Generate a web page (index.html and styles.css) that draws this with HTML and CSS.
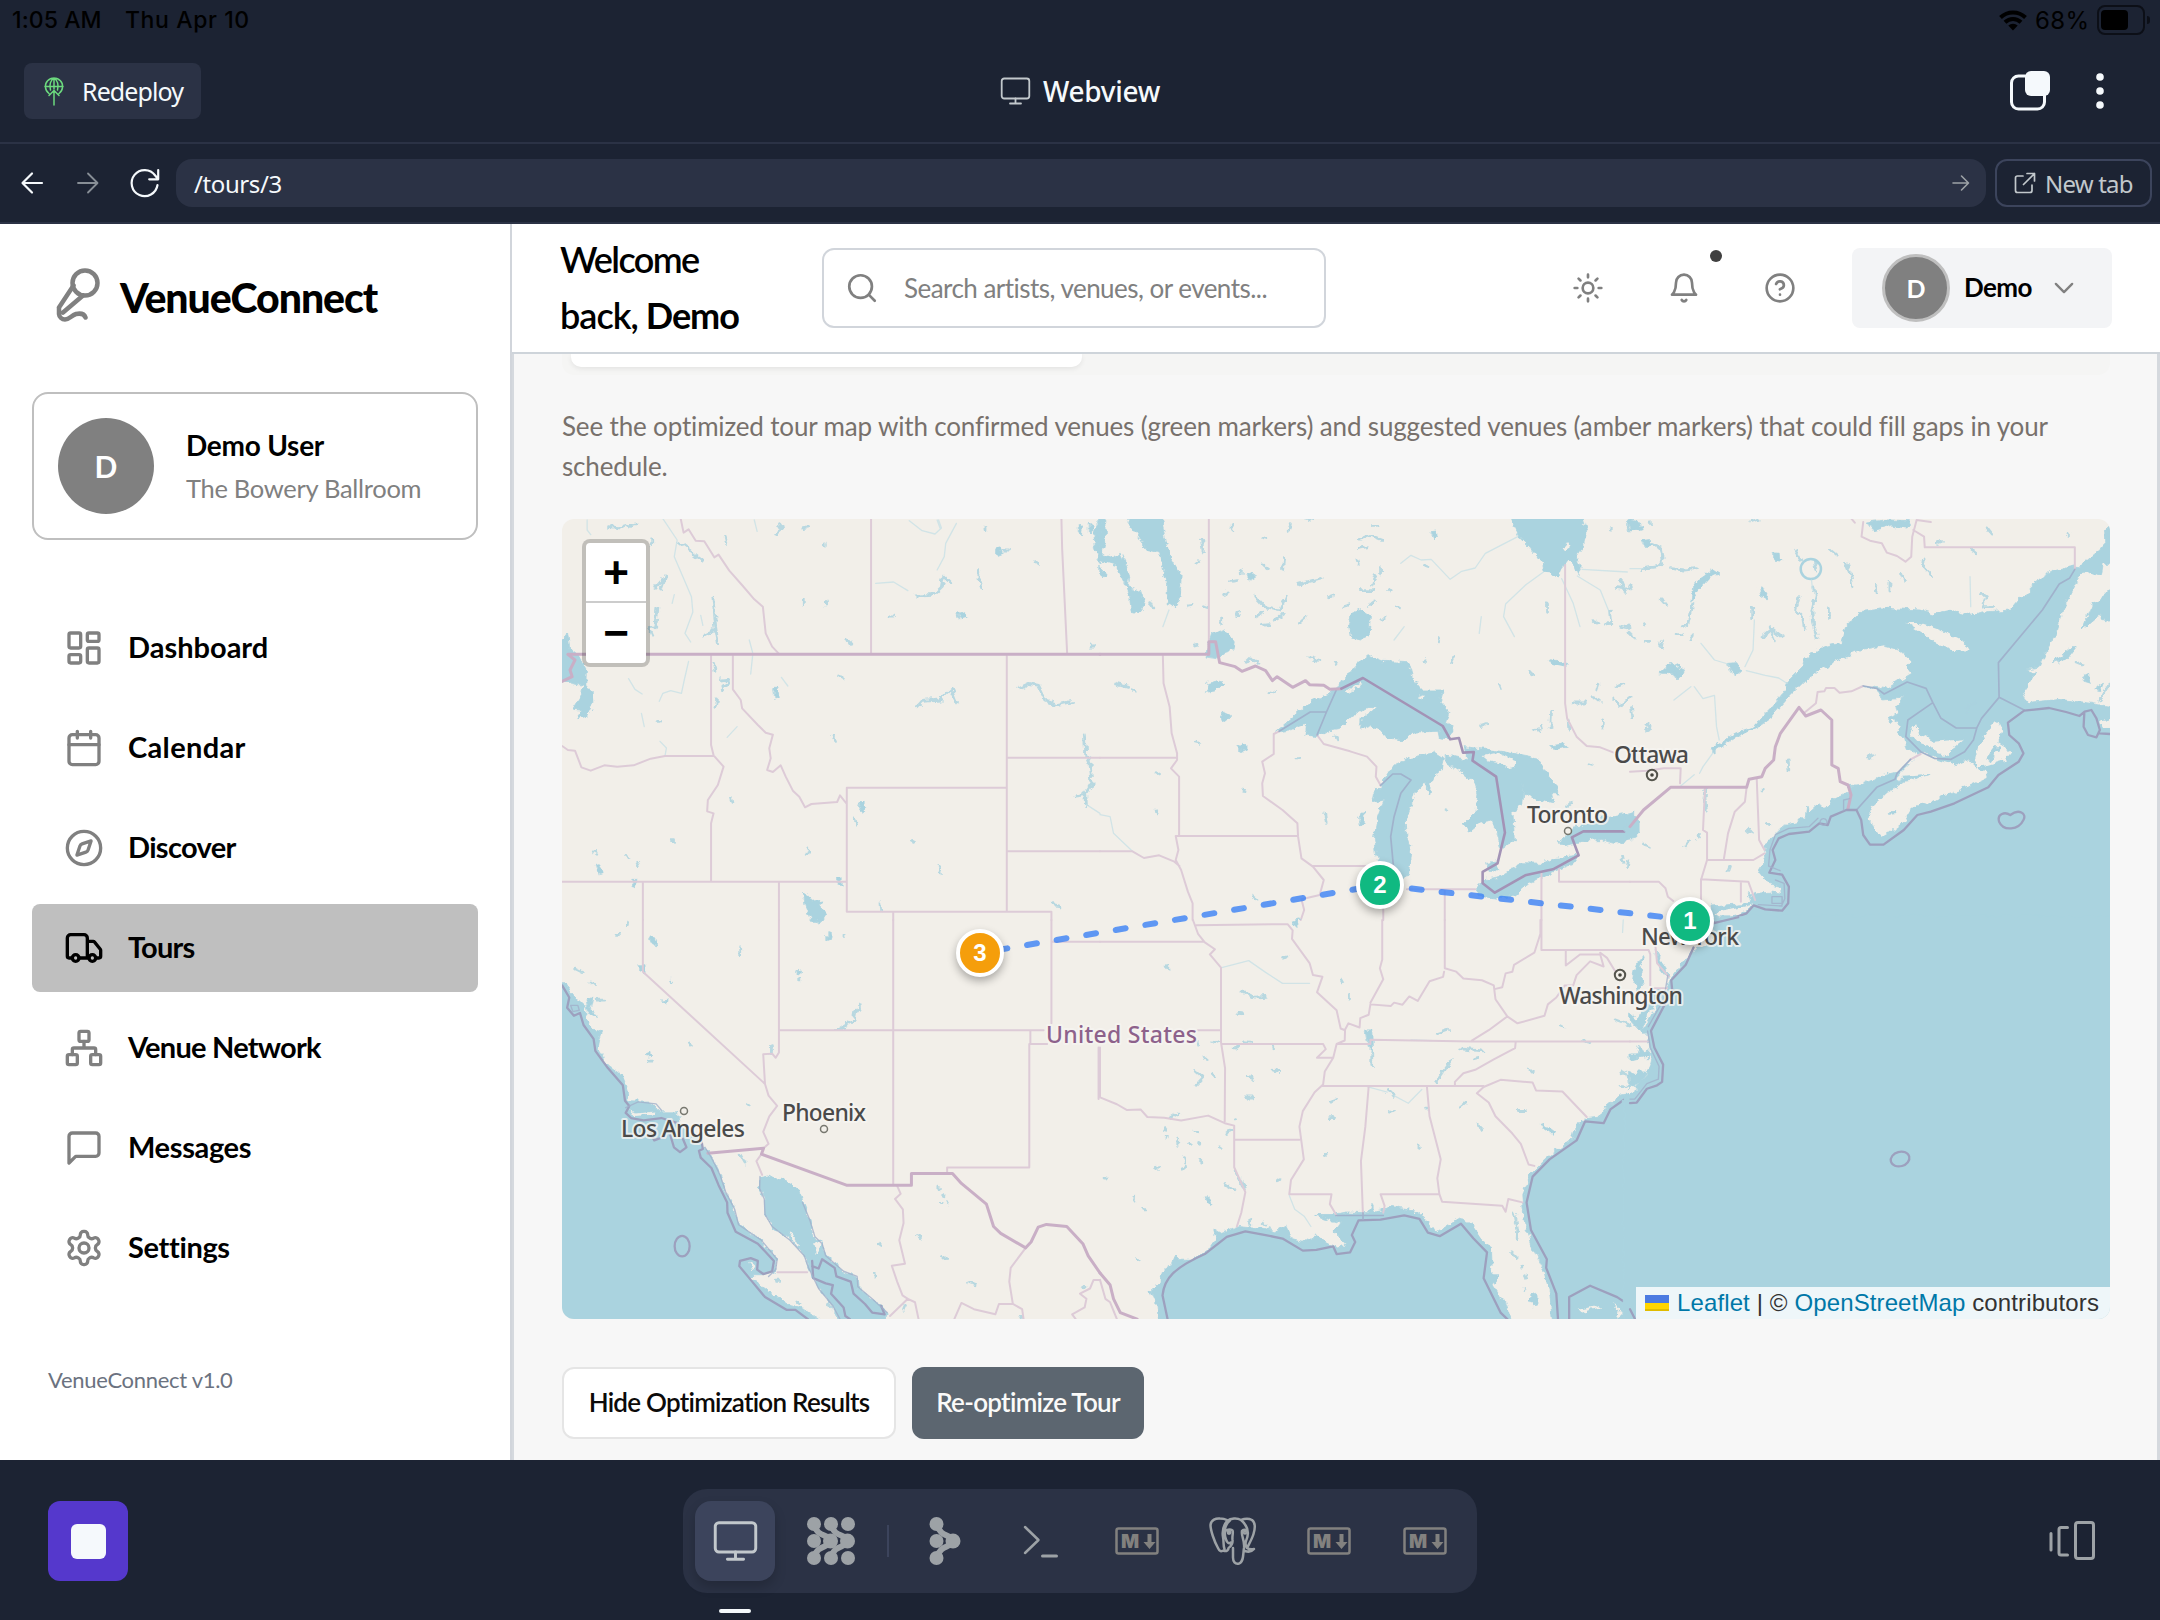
FILE: index.html
```html
<!DOCTYPE html>
<html lang="en">
<head>
<meta charset="utf-8">
<title>Webview</title>
<link rel="stylesheet" href="styles.css">
</head>
<body>
<svg class="defs" width="0" height="0">
  <symbol id="monitor" viewBox="0 0 30 30"><rect x="1.2" y="2.5" width="27.6" height="20" rx="2.5"/><path d="M15 22.500v5M9.500 27.500h11"/></symbol>
  <filter id="rough" x="-5%" y="-5%" width="110%" height="110%"><feTurbulence type="fractalNoise" baseFrequency=".045" numOctaves="3" seed="4"/><feDisplacementMap in="SourceGraphic" scale="22" xChannelSelector="R" yChannelSelector="G"/></filter>
</svg>

<div class="status">
  <span class="status-time">1:05 AM</span><span class="status-date">Thu Apr 10</span>
  <svg class="wifi" viewBox="0 0 28 22"><path d="M1.500 8a18 18 0 0 1 25 0M6 12.800a11.500 11.500 0 0 1 16 0"/><path class="solid" d="M9.300 16a7 7 0 0 1 9.400 0L14 21z"/></svg>
  <span class="status-pct">68%</span>
  <span class="battery"><i></i></span>
</div>

<header class="topbar">
  <button class="redeploy"><svg viewBox="0 0 24 30"><path d="M7 17.500A8.600 8.600 0 1 1 17 17.500M3 10.500h18M12 2v11M8.500 14C7 9 8.500 4 12 2c3.500 2 5 7 3.500 12M12 29V14.500M7 19.500l5-5 5 5"/></svg><span>Redeploy</span></button>
  <div class="title"><svg class="ic-mon"><use href="#monitor"/></svg><span>Webview</span></div>
  <div class="top-actions">
    <svg class="ic-tabs" viewBox="0 0 42 42"><path d="M16 6H9.500A7 7 0 0 0 2.500 13v19a7 7 0 0 0 7 7h19a7 7 0 0 0 7-7V25"/><rect x="16" y="1" width="25" height="25" rx="6"/></svg>
    <svg class="ic-dots" viewBox="0 0 8 36"><circle cx="4" cy="4" r="3.800"/><circle cx="4" cy="18" r="3.800"/><circle cx="4" cy="32" r="3.800"/></svg>
  </div>
</header>

<nav class="urlbar">
  <svg class="nav-ic" viewBox="0 0 24 24"><path d="M22 12H3M12 2.500 2.500 12l9.500 9.500"/></svg>
  <svg class="nav-ic dim" viewBox="0 0 24 24"><path d="M2 12h19M12 2.500 21.500 12 12 21.500"/></svg>
  <svg class="nav-ic reload" viewBox="0 0 32 32"><path d="M28.500 18a13 13 0 1 1-2.300-9.500L29 12M29.200 3v9.300h-9"/></svg>
  <div class="url"><span>/tours/3</span><svg viewBox="0 0 18 18"><path d="M1 9h15M9.500 2 16.500 9l-7 7"/></svg></div>
  <button class="newtab"><svg viewBox="0 0 22 22"><path d="M9 4H3.500A2 2 0 0 0 1.500 6v12.500a2 2 0 0 0 2 2H16a2 2 0 0 0 2-2V13M13 1.500h7.500V9M20.500 1.500 9.500 12.500"/></svg><span>New tab</span></button>
</nav>

<div class="app">
  <aside class="sidebar">
    <div class="brand">
      <svg viewBox="0 0 44 54"><circle cx="29" cy="15" r="12.500"/><path d="M17.500 17.500 3 39.500M27 27.500 7 44.500M3 39.500v6.500a6 6 0 0 0 6 5.500c4.500 0 6-4 11-5.500 5-1 8.500.5 9.500 3.500"/></svg>
      <span>VenueConnect</span>
    </div>
    <div class="profile">
      <div class="avatar">D</div>
      <div><div class="p-name">Demo User</div><div class="p-venue">The Bowery Ballroom</div></div>
    </div>
    <div class="menu">
      <a><svg viewBox="0 0 24 24"><rect width="7" height="9" x="3" y="3" rx="1"/><rect width="7" height="5" x="14" y="3" rx="1"/><rect width="7" height="9" x="14" y="12" rx="1"/><rect width="7" height="5" x="3" y="16" rx="1"/></svg><span class="m-dashboard">Dashboard</span></a>
      <a><svg viewBox="0 0 24 24"><path d="M8 2v4M16 2v4M3 10h18"/><rect width="18" height="18" x="3" y="4" rx="2"/></svg><span class="m-calendar">Calendar</span></a>
      <a><svg viewBox="0 0 24 24"><circle cx="12" cy="12" r="10"/><path d="m16.240 7.760-1.804 5.411a2 2 0 0 1-1.265 1.265L7.760 16.240l1.804-5.411a2 2 0 0 1 1.265-1.265z"/></svg><span class="m-discover">Discover</span></a>
      <a class="active"><svg viewBox="0 0 24 24"><path d="M14 18V6a2 2 0 0 0-2-2H4a2 2 0 0 0-2 2v11a1 1 0 0 0 1 1h2M15 18H9M19 18h2a1 1 0 0 0 1-1v-3.650a1 1 0 0 0-.220-.624l-3.480-4.350A1 1 0 0 0 17.520 8H14"/><circle cx="17" cy="18" r="2"/><circle cx="7" cy="18" r="2"/></svg><span class="m-tours">Tours</span></a>
      <a><svg viewBox="0 0 24 24"><rect x="16" y="16" width="6" height="6" rx="1"/><rect x="2" y="16" width="6" height="6" rx="1"/><rect x="9" y="2" width="6" height="6" rx="1"/><path d="M5 16v-3a1 1 0 0 1 1-1h12a1 1 0 0 1 1 1v3M12 12V8"/></svg><span class="m-network">Venue Network</span></a>
      <a><svg viewBox="0 0 24 24"><path d="M21 15a2 2 0 0 1-2 2H7l-4 4V5a2 2 0 0 1 2-2h14a2 2 0 0 1 2 2z"/></svg><span class="m-messages">Messages</span></a>
      <a><svg viewBox="0 0 24 24"><path d="M12.220 2h-.440a2 2 0 0 0-2 2v.180a2 2 0 0 1-1 1.730l-.430.250a2 2 0 0 1-2 0l-.150-.080a2 2 0 0 0-2.730.730l-.220.380a2 2 0 0 0 .730 2.730l.150.100a2 2 0 0 1 1 1.720v.510a2 2 0 0 1-1 1.740l-.150.090a2 2 0 0 0-.730 2.730l.220.380a2 2 0 0 0 2.730.730l.150-.080a2 2 0 0 1 2 0l.430.250a2 2 0 0 1 1 1.730V20a2 2 0 0 0 2 2h.440a2 2 0 0 0 2-2v-.180a2 2 0 0 1 1-1.730l.430-.250a2 2 0 0 1 2 0l.150.080a2 2 0 0 0 2.730-.730l.220-.390a2 2 0 0 0-.730-2.730l-.150-.080a2 2 0 0 1-1-1.740v-.500a2 2 0 0 1 1-1.740l.150-.090a2 2 0 0 0 .730-2.730l-.220-.380a2 2 0 0 0-2.730-.730l-.150.080a2 2 0 0 1-2 0l-.430-.250a2 2 0 0 1-1-1.730V4a2 2 0 0 0-2-2z"/><circle cx="12" cy="12" r="3"/></svg><span class="m-settings">Settings</span></a>
    </div>
    <div class="version">VenueConnect v1.0</div>
  </aside>

  <section class="main">
    <header class="head">
      <h1><span class="h-welcome">Welcome</span><br><span>back, <b>Demo</b></span></h1>
      <div class="search"><svg viewBox="0 0 24 24"><circle cx="11" cy="11" r="8"/><path d="m21 21-4.300-4.300"/></svg><span>Search artists, venues, or events...</span></div>
      <div class="tools">
        <svg viewBox="0 0 24 24"><circle cx="12" cy="12" r="4"/><path d="M12 2v2M12 20v2M4.930 4.930l1.410 1.410M17.660 17.660l1.410 1.410M2 12h2M20 12h2M6.340 17.660l-1.410 1.410M19.070 4.930l-1.410 1.410"/></svg>
        <div class="bell"><svg viewBox="0 0 24 24"><path d="M6 8a6 6 0 0 1 12 0c0 7 3 9 3 9H3s3-2 3-9M10.300 21a1.940 1.940 0 0 0 3.400 0"/></svg><i></i></div>
        <svg viewBox="0 0 24 24"><circle cx="12" cy="12" r="10"/><path d="M9.090 9a3 3 0 0 1 5.830 1c0 2-3 3-3 3M12 17h.010"/></svg>
      </div>
      <button class="user"><span class="u-av">D</span><span class="u-name">Demo</span><svg viewBox="0 0 24 24"><path d="m5 8.500 7 7 7-7"/></svg></button>
    </header>

    <div class="content">
      <div class="strip"><div class="tab"></div></div>
      <p class="desc"><span>See the optimized tour map with confirmed venues (green markers) and suggested venues (amber markers) that could fill gaps in your</span><br><em>schedule.</em></p>
      <div class="map">
        <svg class="map-svg" viewBox="562 519 1548 800">
          <!-- north-west -->
          <g transform="translate(540 500) scale(.35714 .33333)">
            <path class="water" d="M50 430 70 408 80 396 86 450 110 470 130 510 128 560 146 570 148 610 130 650 100 656 120 630 94 628 116 590 120 556 90 550 50 540ZM738 1178 756 1190 764 1204 790 1200 778 1216 804 1240 790 1264H760L742 1215ZM1508 72 1522 84 1518 104 1508 96ZM1536 70 1546 76 1544 96 1536 92ZM1550 90 1572 50V190L1556 150ZM652 570 662 556 670 590 656 594ZM890 914 902 904 912 928 904 936ZM1168 344 1184 338 1196 352 1182 356ZM1278 146 1290 142 1294 160 1280 166ZM158 1096 166 1094 174 1118 164 1120ZM258 1138H268V1160L256 1156ZM836 1134H846V1156H836Z"/>
            <path class="lake" d="M508 540 522 538 526 550 512 558 514 570M1058 620 1072 604 1120 600 1152 568 1166 606M1052 288 1100 286 1124 262 1130 228 1150 250M1338 566 1370 550 1396 556 1416 600 1450 614 1492 604M1228 212 1230 244 1238 264M484 292 492 380 500 434M458 410 490 392M330 326 324 380 306 384 316 408M338 270 352 228 324 262M820 704 830 728M736 86 748 84M668 74 676 88 660 102M796 132V138M1246 76V92M740 298V316M802 306V316M862 420 870 436M980 348H990M1298 150H1312M750 1050 745 1066M536 894 540 910M880 960 884 976M326 664H338M362 1022H374M240 1066 246 1076M1040 1016 1046 1030M1120 1096 1124 1116M952 1206 954 1236M1524 704 1528 760 1540 790 1546 850 1528 880 1530 914M1498 888 1528 884M386 124 448 174 452 188M516 112 520 130M192 80 228 84 266 72M1540 438H1550M310 116V132M1388 184 1396 194M1436 1214 1456 1218M486 490 490 514M494 600 490 622M836 528 852 532M154 1054 156 1060M274 1084 278 1094"/>
            <path class="river" d="M344 56 384 120 376 170 404 240 424 290 428 336 406 400 422 426M416 484 404 540 396 580 366 572 344 580 334 604M586 420 596 460 590 522M248 536 266 568 286 582M676 532 694 558M524 712 552 680M336 724 354 744 350 768M1034 62 1070 92 1106 102 1124 84 1116 60M1166 70 1136 130 1132 170 1112 210M940 250 990 246 1030 272M370 310 376 284M450 346 456 376M284 640 292 680M1530 914 1568 940M1112 60 1120 84M132 60V90L142 104M600 60 608 94"/>
            <path class="state" d="M394 56 402 98 416 88 436 122 460 124 488 172 500 164 530 212 568 258 600 298 624 320 632 400 650 440 668 460M927 56V460M1460 56 1462 145 1476 460M1307 468V1235M1307 773H1568M1307 1054H1568M859 863H1307M859 863V1235H1432V1260M989 1235V1260M479 468V735L486 766 514 800 498 855 470 900 468 934 486 940 479 970V1145M540 468V568L562 600 566 625 610 675 632 698 652 704 642 745 646 775 636 810 652 816 674 796 688 830 708 872 726 890 742 922 760 912 832 906 840 886 859 912M62 1145H859M288 1145V1260M669 1145V1260M62 738 78 750 98 752 116 802 142 812 180 796 216 800 262 796 310 776 350 768H486"/>
            <path class="nation" d="M62 544 90 530 84 510 98 480 78 463H1568"/>
          </g>
          <!-- great lakes -->
          <g transform="translate(1100 500) scale(.33801 .33333)">
            <path class="water" d="M72 46H180L196 125 210 175 240 225 238 290 220 318 198 310 200 250 184 200 180 160 140 150 120 120 100 90ZM-2 46 14 60 16 110 6 160 40 170 60 160 74 190 88 230 84 260 120 275 134 315 118 338 92 334 88 290 72 250 50 200-2 185ZM0 200 24 228 16 238 0 224ZM1206 40H1424L1440 95 1430 140 1410 170 1424 200 1414 224 1404 196 1386 178 1366 205 1354 234 1332 216 1314 214 1308 186 1270 142 1240 112ZM745 340 775 328 800 345 796 410 770 420 740 408 735 375ZM520 696 560 660 620 606 700 568 720 530 750 512 768 482 790 464 840 484 912 488 926 540 950 570 1016 570 1006 604 1032 634 1022 670 1046 684 1030 716 1004 714 1000 694 940 696 890 720 850 714 826 686 800 676 770 688 776 655 820 622 790 624 740 654 710 684 680 690 640 710 606 704 612 672 570 688ZM812 1020 818 960 840 900 806 908 812 880 836 850 870 795 920 772 990 758 1016 775 1010 810 985 830 972 884 962 850 930 880 918 925 906 960 908 1010 922 1060 916 1120 896 1144H840L822 1080ZM1022 764 1090 780 1080 740 1140 748 1200 756 1294 774 1320 820 1350 862 1360 885 1336 884 1342 908 1290 896 1256 880 1244 840 1254 880 1250 912 1222 940 1226 1020 1186 1050 1176 1000 1160 960 1126 966 1090 996 1076 975 1112 940 1118 880 1110 850 1060 810 1024 786ZM1110 1165 1134 1140 1180 1130 1250 1088 1310 1090 1350 1072 1416 1066 1400 1090 1340 1116 1270 1150 1230 1184 1190 1196 1130 1190ZM1148 1090 1170 1086 1180 1108 1156 1118ZM1354 1024 1378 1008 1394 982 1440 976 1480 955 1582 934V1018L1520 1030 1480 1018 1420 1026 1370 1034ZM314 470 318 440 330 400 350 390 380 400 400 430 396 450 366 460 350 476ZM312 576 320 550 350 542 366 550 344 572ZM356 650 366 636 386 646 372 662ZM410 738 424 730 434 750 420 756ZM432 224 450 216 460 232 444 240ZM1330 478 1346 470 1360 486 1384 494 1376 502 1340 494ZM1330 738 1370 732 1384 742 1350 748ZM766 950 780 940 782 970 772 978ZM980 98 996 96 998 112 988 116Z"/>
            <path class="land" d="M1366 142 1386 130 1390 142 1374 152ZM940 592 960 586 958 598ZM724 578 774 546 768 560 730 582ZM1132 768 1170 760 1196 768 1226 780 1232 800 1210 804 1180 790 1150 784Z"/>
            <path class="lake" d="M458 292 480 318 510 324 534 330 550 290M516 360 540 346M584 254 654 234M590 370 610 352M430 490 446 474 470 490M624 474 648 482M700 484 696 494M46 552 82 562M96 572 104 576M476 112 494 116M560 88 566 74M606 56 630 62M770 118 800 106 830 118M764 146 790 140M806 76H820M544 170 540 210M484 198 494 206M386 244 410 242M418 210V222M366 290 376 276M392 70 390 90M300 120 306 156M284 186 290 182M830 200V220M760 180 764 192M770 272 810 272M806 256 814 230M834 360 846 348M874 320 886 324M812 306 800 314M720 320 740 314M680 290 688 284M150 308 156 324M262 318 276 316M306 320 322 326M360 350 360 374M410 330 404 350M462 350 480 340M480 376 500 374M960 196 970 200M854 264 862 272M1000 412 1006 422M1040 488 1050 466M960 488 966 482M1324 312V334M1272 512 1280 524M1184 556 1188 566M1288 688 1296 696M1400 606H1436M1456 590 1480 600M1470 570 1476 550M1300 676 1304 690M1336 632 1334 680M1388 660 1390 690M1126 680 1142 674M1490 660 1488 684M1530 260 1560 264M1540 240 1556 280M1510 330 1514 370 1494 372M1540 376 1568 382M1462 362 1470 368M1520 600 1540 620 1568 590M1530 560 1550 550M1510 90H1516M1560 70V84M1380 920 1394 908M668 940 672 970M166 824 176 822M166 930 170 938M420 870 432 872M580 774 590 772M284 726 292 728M500 574 520 580M280 438 290 436M1020 926 1026 930M694 708 700 720M1450 794 1456 796M1546 1070 1550 1090M1564 1080 1560 1100M450 1190 464 1200"/>
            <path class="river" d="M0 944 30 950 40 1000 96 1054M890 190 920 166 950 180 980 178 1036 238 1070 214 1110 204 1140 160 1236 110M1312 216 1260 254 1200 312 1194 350 1226 410M1366 236 1400 310 1420 380M1412 228 1480 270 1504 330M1426 208 1560 216M870 420 900 380M1128 350 1122 400M204 330 186 380"/>
            <path class="state" d="M322 56V425M1376 195V610L1382 655 1410 710 1440 738 1480 742 1520 758M186 468 188 550 206 620 212 700 228 760V780L210 805 234 830V1008H224L232 1050 224 1080 240 1110 260 1175 274 1210V1260M0 773H228M0 1054H96L130 1074 175 1066 220 1085 235 1098M228 1008H584M530 694 514 702V762L480 785 488 820 480 850 482 888 540 930 584 970 586 1010 596 1075 630 1100 662 1140 650 1185 596 1198 604 1230 594 1260M628 1098H830M642 705 662 732 740 754 790 770 818 800 816 830 830 856M908 1168H1110M1020 1170V1260M838 1220V1260M1306 1120V1260M1358 1108V1145H1568"/>
            <path class="sea-line" d="M530 694 622 636H670L700 568M670 636 642 705M830 856 866 822 890 822 920 840 890 880 870 950 860 1010 868 1098"/>
            <path class="nation" d="M0 463H322V425H342L354 488 400 500 420 514 460 498 490 512 510 542 524 530 570 562 608 542 620 554 662 556 680 568 714 566"/>
            <path class="nation-sea" d="M714 566 778 534 1014 678 1036 718 1062 714 1074 758 1106 756 1102 782 1172 830 1198 998 1176 1090 1132 1116V1150L1168 1178 1258 1126 1340 1108 1416 1066 1396 1012 1430 994H1556L1568 968"/>
          </g>
          <!-- north-east -->
          <g transform="translate(1630 500) scale(.33801 .33333)">
            <path class="water" d="M240 1282 240 1218 350 1210 372 1180 350 1190 380 1180 420 1176 450 1180 448 1160 410 1150 380 1115 400 1080 396 1050 420 1010 450 980 490 965 516 950 520 920 530 940 560 915 580 925 600 900 640 880 650 857 690 852 740 830 790 815 830 790 860 765 820 745 812 715 790 700 800 680 766 656 795 640 790 620 815 575 800 595 745 600 735 570 686 558 760 566 800 540 834 520 820 500 836 484 800 450 750 438 690 448 620 480 560 510 520 540 470 590 420 650 380 680 310 715 270 740 246 756 240 748 270 728 310 700 370 678 390 650 420 620 460 570 466 545 510 500 515 480 545 455 580 435 628 426 640 380 680 335 760 325 860 330 900 342 950 330 1010 346 1060 335 1125 330 1160 290 1190 275 1190 250 1250 215 1310 198 1330 200 1390 150 1408 130 1404 90 1440 60V190L1400 190 1394 230 1340 210 1320 250 1300 290 1280 330 1260 400 1240 435 1210 505 1172 510 1200 520 1162 575 1175 608 1270 598 1330 605 1440 622V1282ZM-14 940 30 960V1000L-14 1012ZM1440 260 1370 310 1340 390 1385 350 1440 376ZM290 490 316 488 328 510 312 524 294 510ZM36 124 60 122 64 136 44 140ZM180 302 186 262 210 232 245 208 266 222 240 228 200 272ZM84 520 120 488 160 510 150 530 110 524ZM-4 60 30 66 36 86 0 96ZM700 66 760 60 830 62 820 84 770 78 720 92ZM384 264 408 276 404 296 388 286ZM424 158 444 160 446 184 434 182Z"/>
            <path class="land" d="M818 368 860 370 920 390 990 425 1006 452 960 450 900 425 870 400ZM826 700 846 670 852 700 900 725 984 718 950 745 944 768 910 760 890 740 850 726ZM790 830 850 770 870 755 910 780 960 796 1000 778 1020 800 1050 810 1056 835 1000 860 930 885 880 912 860 906 830 930 810 965 770 995 744 1010 720 985 706 950 715 920 760 880 810 850 790 840ZM1020 780 1030 740 1060 690 1085 664 1098 690 1090 730 1130 755 1110 780 1060 795 1030 800ZM1394 664 1434 654V676L1400 684ZM250 1240 330 1222 366 1212 330 1240 270 1254ZM1370 600 1390 580 1372 580Z"/>
            <path class="water" d="M800 832 890 826 850 838 800 846ZM768 936 780 934 784 944 772 946ZM1050 780 1080 740 1096 740 1070 782ZM1340 530 1360 520 1364 550 1344 544ZM1376 566 1400 550 1392 572ZM1250 490 1310 440 1320 440 1290 480Z"/>
            <circle class="ring" cx="535" cy="207" r="30"/>
            <path class="lake" d="M545 184 550 210M500 290 490 330 510 350 516 386M544 264 548 290 538 330 540 370 554 416M360 322V360M390 410 420 386 450 410M412 380 430 420M468 780 470 810M716 764 706 778M640 190 652 220 660 260M870 180 868 200 896 230M1040 280 1054 290 1042 318M724 256 728 276M766 244V276M800 220 812 246M590 320V352M490 150 508 180M596 150 610 162M92 296 110 316M40 206 80 200 98 180 92 144 60 130M0 254 4 264M154 380 172 370 186 310M0 400 16 412M44 424H56M40 368 44 374M90 440 94 420M136 404H152M180 420 190 404M120 206 160 210 194 206M46 690 60 682 50 672M4 620 8 650M404 970 414 974M350 990 362 998M40 1032 60 1038M294 1102 290 1114M162 1040 176 1020M206 1000 200 1014M120 484 136 530M1054 80 1070 100M1296 100 1300 106M906 130 922 124M1010 150 1024 160M992 640 1000 620 1022 604M224 868 222 900 226 930M1320 486 1340 494M1420 550 1390 600M60 66V74M360 64 380 58M1050 320 1070 320M394 866V876M350 1180 362 1196M420 1196 440 1192"/>
            <path class="river" d="M344 512 400 526 440 534 464 550M210 430 250 480 290 492M340 500 364 450 368 360M537 240 540 270M246 758 216 800 206 820M190 824 150 858M190 560 216 596 250 586 256 680 264 720M0 206 40 206M1006 230 1008 320M130 600 180 560"/>
            <path class="state" d="M514 640 550 610 555 576 575 574 580 564H605L620 578 655 574 690 558M222 862 216 990 228 998V1080L210 1140V1210M228 1080H365L398 1060M375 838 382 1020 398 1050M345 862 340 905 310 935 290 1000 278 1075M210 1138 350 1145 370 1200M328 1148V1205M0 1145H85L105 1165 112 1190 128 1203M0 815 50 812 100 805 150 805 148 850M655 56 665 68M690 66 685 110 710 122 745 130 760 158 790 168 815 185 832 170 835 110 848 60 890 66M838 90 870 110 872 142H1316V208M860 762 830 778"/>
            <path class="nation" d="M0 980 40 930 120 862H345L352 838 390 830 400 805 425 780 430 740 445 700 500 622 520 648 565 630 597 660V795L616 805 622 845 645 855 654 885 645 925"/>
            <path class="sea-line" d="M690 558 730 565 752 582 820 546 876 565 896 608 920 655 965 684H1026L1040 655 1092 592 1090 488 1220 330 1270 252 1300 235 1316 208M896 608 822 660 816 710 860 755 900 775 950 778 990 755 1016 720 1026 684M1092 592 1166 630M830 778 790 820 784 838 730 862 670 930"/>
            <path class="coast-line" d="M245 1266 300 1256 345 1240 366 1216 400 1228 450 1232 468 1210 470 1160 450 1124 412 1118 430 1080 422 1050 440 1015 470 1002 530 995 560 970 585 975 594 950 640 930H670L684 960 690 1005 710 1034 750 1034 810 990 850 945 890 935 960 910 1060 862 1090 825 1150 785 1164 760 1150 730 1122 705 1118 668 1166 632 1240 624 1290 636 1330 648 1345 635 1365 630 1380 655 1390 690 1380 712 1355 705 1342 680 1344 640M1390 700 1420 702M1092 965C1085 940 1110 935 1125 945 1150 925 1175 940 1164 960 1150 990 1105 995 1092 965Z"/>
            <path class="coast-thin" d="M444 1112 410 1098 414 1050 430 1004 470 985 530 980 556 955M450 1218 380 1214 448 1218 458 1196 456 1150 430 1140M572 956a10 10 0 1 0 1 0M420 1190h30v20h-30zM632 930V900L650 896"/>
          </g>
          <!-- south-west -->
          <g transform="translate(540 920) scale(.35714 .34439)">
            <path class="water" d="M48 160 100 225 126 250 130 290 154 320 172 325 165 345 160 370 190 420 230 450 245 490 250 525 300 526 340 560 385 560 390 600 440 630 450 645 462 660 480 690 504 740 520 790 545 840 556 885 620 930 664 985 660 1015 640 1030 600 1030 590 1040 640 1080 700 1120 740 1130 780 1159V1180H48ZM616 745 640 740 660 752 680 750 728 785 735 820 755 870 770 920 790 940 800 975 850 1020 888 1035 890 1065 930 1100 972 1140 965 1180H840L820 1120 780 1070 752 1010 740 975 700 930 650 890 630 855 628 810 615 780ZM306 50 320 48 326 72 314 70ZM280 130H294V152H280ZM130 230 148 226 142 254 158 280 136 268ZM804 34 816 38 814 56 804 60ZM720 150 732 148 730 160 720 158ZM298 392 312 386 316 396 300 398ZM344 232 356 230 354 240ZM768 0H788L782 8ZM366 170 374 178 370 184Z"/>
            <path class="land" d="M698 906 708 912 726 946 714 944ZM768 935 786 938 788 952 772 968ZM250 556 270 562 320 556 318 564 260 570ZM586 992 600 1000 596 1020Z"/>
            <path class="lake" d="M840 316 880 290 884 268 900 246M830 318H856M562 80V104M100 142 116 150M140 180 152 190M160 230H184M216 42H222M242 6V14M854 46V54M416 360 424 366M302 410H312M724 174H728M560 680 574 706M1114 776 1124 778M1122 796 1132 798M1118 820H1126M1142 818 1146 824M1060 918 1068 926M1130 980 1136 986M934 1026 938 1034M1200 1056 1218 1062M948 936 956 942M656 1046 676 1046M808 1114 816 1130M580 536 586 540M722 1106 726 1114M648 368V388M1346 1154H1350M1520 1064 1526 1066M1018 1130 1022 1120"/>
            <path class="state" d="M288 0V150L630 476 625 390 650 388 660 400 669 385V0M669 320H1410M989 0V770M1432 0V300M1432 63H1568M630 476 640 510 664 540 642 570 625 615 640 650 626 663M1373 320V360H1420M1370 360V719H1140V736M620 680 606 700 622 740M1564 370V520M665 1023H748M1000 772 1010 795 994 810 1016 840 1018 880 1006 930 1022 998 985 1004 1000 1050 1015 1090 1030 1100 980 1150M1030 1100 1050 1110 1060 1159M1360 952 1318 1010 1314 1050 1324 1115 1285 1115 1275 1145 1215 1130 1180 1112 1160 1159M1324 1115 1350 1130 1354 1159M1568 1045 1550 1045 1540 1070 1512 1085 1530 1100 1525 1125 1490 1145 1500 1159"/>
            <path class="nation" d="M470 677 626 663 620 680 858 770H1040V736H1155L1180 765 1250 825 1270 890 1290 910 1360 952 1375 935 1395 892 1418 884 1475 890 1520 940 1535 975 1568 1025"/>
            <path class="coast-line" d="M62 190 82 225 76 255 95 278 112 270 122 305 150 345 155 380 190 430 232 480 238 525 250 540 240 560 255 575 290 582 340 575 385 590M452 640 456 665 445 670 450 690 480 720 500 770 524 820 525 850 548 905 610 940 655 990 650 1020 625 1028 608 1015 610 990 590 982 560 990 558 1005 590 1045 630 1095 690 1132 715 1132 750 1159M365 625 375 660 392 674 410 660 400 635M310 620 320 640 345 630M762 990 765 1040 800 1055 820 1060 815 1085 850 1125 855 1150 868 1159M762 1005 780 1012 790 985 825 1010 830 1035 870 1050 878 1085 910 1115 930 1140 965 1145 955 1120"/>
            <ellipse class="coast-line" cx="398" cy="947" rx="21" ry="30"/>
            <path class="coast-thin" d="M616 745 615 780 628 810 630 855 650 890 700 930 740 975 752 1010 780 1070 820 1120 840 1159M735 820 755 870 770 920 790 940 800 975 850 1020 888 1035 890 1065 930 1100 972 1140M462 660 480 690 504 740 520 790 545 840 556 885 620 930 664 985 660 1015 640 1035M86 248h20l4 14-18 4zM240 545 275 528 325 534 340 552"/>
          </g>
          <!-- south -->
          <g transform="translate(1100 920) scale(.33801 .34439)">
            <path class="water" d="M172 1180 165 1110 150 1075 180 1050 185 1020 210 1004 225 970 240 985 270 985 320 960 345 925 335 895 360 910 410 890 460 895 520 905 550 886 570 925 610 935 640 915 660 930 700 950 730 940 690 905 710 880 670 870 635 855 690 855 730 848 795 850 805 825 815 848 870 835 930 845 965 870 975 895 1000 905 1040 880 1065 865 1100 885 1130 930 1158 950 1160 1000 1156 1030 1182 1030 1160 1060 1180 1090 1200 1110 1218 1159V1180ZM1588 500 1540 508 1500 540 1480 572 1430 578 1400 615 1395 635 1320 690 1275 735 1248 800 1255 870 1280 950 1310 1010 1330 1080 1340 1180H1588ZM1268 1102 1288 1084 1300 1094 1298 1118 1282 1120ZM788 318 804 320 806 380 798 372ZM1306 590 1322 600 1344 616 1336 620 1316 606ZM312 804 326 814 328 826 318 820ZM564 6 576 20 594 0Z"/>
            <path class="land" d="M648 894 664 886 672 896 656 904ZM668 920 690 914 710 926 724 946 700 944 684 936ZM1412 1132 1446 1126 1478 1118 1486 1124 1450 1132 1424 1140ZM1514 1112 1532 1124 1544 1148 1530 1158 1534 1136Z"/>
            <path class="lake" d="M282 440 304 458 284 480M332 446 342 456M310 402 318 408M420 206 456 224 492 222M410 268 424 270M540 108 556 104M712 172 718 182M738 222V230M196 132 204 140M438 452 454 460M512 436 530 440M434 514H452M684 526 700 520M682 574H694M850 498 872 512M996 468 1040 408M1064 374 1130 380M1104 406 1120 402M998 330 1028 320M1064 546 1080 534M1240 556H1256M1122 592 1128 608M1274 434 1280 440M940 656 948 660M664 684 672 680M370 768 396 786M400 728 412 748 424 776M524 760 532 754M190 606 198 608M196 628V634M230 636V654M262 650 270 654M292 646V654M250 690 256 706M298 698V706M240 724 256 718M166 718 174 724M12 752H18M100 808 104 814M126 840 136 842M350 656 362 660M372 620 388 616M398 580H404M284 614H290M104 986H110M1226 850 1236 900 1234 930M1218 966 1232 980M1248 1008V1014M1256 1030 1260 1040M1254 1070V1074M446 870V886M480 880 488 886M500 896 510 900M804 380V420M336 356 348 350M286 350 292 364M400 372 408 368M424 350 446 352M514 366V374M208 574 230 560M1524 290 1568 306M1540 440 1568 456M1544 480 1568 484M1364 310 1372 314M1430 350 1452 356M960 546H968M856 558 872 556"/>
            <path class="river" d="M790 484 850 500M870 510 912 532 952 492M360 138 440 118 490 152 540 184 620 184M560 800 576 840 604 860 624 890M1548 0 1546 36M920 348 986 350"/>
            <path class="state" d="M275 0 290 40 310 65 340 85 325 100 358 138V355L370 430 369 585M0 63H305M285 15 555 12 570 30 568 55 620 125 630 160 658 165 642 210 700 262 712 315 725 320 724 350 700 360 690 400 665 440 660 478 635 500 600 555 590 600 603 695 565 755 560 796H685L680 825 700 858M288 320H358M360 360H660L668 375 642 400H688M700 360H800V348L1100 353H1568M655 482H1135M0 370V515L50 535 80 552 120 550 140 572 190 574 240 582 320 568 369 590 397 597V718L430 790 418 850 405 890M397 638H590M795 482 785 600 772 700 778 858M967 482 975 570 1008 695 998 750 1004 796H830L842 830 838 850M1004 796 1012 818 1190 830 1200 847 1208 810 1250 820M1230 353 1228 372 1165 405 1110 435 1075 445 1050 470V482M1135 485 1115 503 1150 530 1170 570 1220 620 1245 650 1268 710 1285 714M1135 485 1185 464 1280 472 1290 495 1368 498 1440 572M1100 350 1150 320 1205 280 1170 230 1165 190 1130 175 1075 170 1054 150 1020 140V0M1018 150 1015 165 975 178 940 235 915 222 895 246 870 240 860 250 800 245 795 275 770 285 768 312 735 300 724 320M835 0V115L828 140 838 172 800 240M1170 200 1190 195 1200 155 1220 150 1225 130 1285 95 1303 40V0M1306 0V87H1568M1205 280 1235 300 1315 278 1325 245 1350 225 1375 190 1400 190 1410 160 1450 120 1490 135 1480 100 1420 100 1378 132V87M1480 95 1500 110 1525 150"/>
            <path class="nation" d="M0 1025 30 1060 40 1100 60 1140 110 1159"/>
            <path class="state" d="M0 1045 16 1100 30 1110 50 1159"/>
            <path class="coast-line" d="M200 1159 185 1090C190 1040 220 1010 310 970L375 920 430 904 490 915 540 925 600 960 640 958 690 948 700 970 740 965 755 935 745 915 765 872 830 870 900 858 945 868 970 908 1005 918 1068 882 1105 925 1145 965 1135 1040 1185 1140 1205 1159M1568 525 1550 522 1510 550 1490 590 1435 585 1410 640 1330 695 1280 745 1262 820 1275 900 1322 985 1320 1010 1350 1085 1355 1159M1388 1159V1095L1450 1062 1530 1095 1568 1120"/>
            <path class="sea-line" d="M698 858H838M778 850V868"/>
          </g>
          <!-- atlantic -->
          <g transform="translate(1630 920) scale(.33801 .34439)">
            <path class="water" d="M182 90 160 120 130 155 110 200 60 260 34 320 55 340 62 400 50 450 0 500-20 512V1180H1440V-12H250L245 60ZM75 90 110 140 112 170 90 145ZM45 100 30 140 40 185 22 206 8 165 15 130ZM104 206 66 270 46 310 28 318-4 284V270L20 290 46 250 80 200ZM30 365 40 385 55 380V400L20 400 0 404V390L20 388ZM-4 440 20 446 34 430 50 446 30 470 0 490Z"/>
            <path class="land" d="M-4 406 50 398 58 420 46 440 20 440 0 430ZM0 484 22 490 0 504ZM230-10 250-8 236 6Z"/>
            <path class="state" d="M0 87H55L60 100V190M62 198H110M0 353H55M75 72 80 125 115 165"/>
            <path class="coast-line" d="M188 80 165 130 122 175 125 205 95 260 62 322 72 370 98 420 95 470 80 480 50 490 20 530 0 532M245 10 320-8M0 1130 15 1159"/>
            <path class="coast-thin" d="M52 322 60 370 86 425 84 462 50 475 14 520 0 520M112 160 100 230 54 310"/>
            <ellipse class="coast-line" cx="799" cy="694" rx="28" ry="21" transform="rotate(-15 799 694)"/>
          </g>
          <g class="dots"><circle cx="1568" cy="831" r="3.500"/><circle cx="824" cy="1129" r="3.500"/><circle cx="684" cy="1111" r="3.500"/><circle class="cap" cx="1652" cy="775" r="5.200"/><circle class="pt" cx="1652" cy="775" r="1.800"/><circle class="cap" cx="1620" cy="975" r="5.200"/><circle class="pt" cx="1620" cy="975" r="1.800"/></g>
          <g class="labels">
            <text x="1614" y="763" textLength="75">Ottawa</text>
            <text x="1527" y="823" textLength="81">Toronto</text>
            <text x="1641" y="945" textLength="98">New York</text>
            <text x="1559" y="1004" textLength="124">Washington</text>
            <text x="782" y="1121" textLength="84">Phoenix</text>
            <text x="621" y="1137" textLength="124">Los Angeles</text>
            <text class="country" x="1046" y="1043" textLength="151">United States</text>
          </g>
          <path class="route" d="M1690 920 1380 885 980 953"/>
        </svg>
        <span class="pin p1">1</span><span class="pin p2">2</span><span class="pin p3 amber">3</span>
        <div class="zoom"><span>+</span><span>−</span></div>
        <div class="attr"><svg viewBox="0 0 24 16"><path fill="#4c7be1" d="M0 0h24v8H0z"/><path fill="#ffd500" d="M0 8h24v6H0z"/><path fill="#e0bc00" d="M0 14h24v2H0z"/></svg><span><a>Leaflet</a> | © <a>OpenStreetMap</a> contributors</span></div>
      </div>
      <div class="actions"><button class="btn-hide"><span>Hide Optimization Results</span></button><button class="btn-opt"><span>Re-optimize Tour</span></button></div>
    </div>
  </section>
</div>

<footer class="bottom">
  <button class="stop"><i></i></button>
  <div class="dock">
    <div class="cell active"><svg class="d-mon"><use href="#monitor"/></svg><i></i></div>
    <div class="cell"><svg class="d-blob" viewBox="0 0 48 48"><path d="M8 9C10 20 22 17 24 24 22 31 10 28 8 39M25 9C27 20 39 17 41 24 39 31 27 28 25 39"/><ellipse cx="7" cy="7" rx="7" ry="7"/><ellipse cx="24" cy="7" rx="7" ry="7"/><ellipse cx="41" cy="7" rx="7" ry="7"/><circle cx="7" cy="24" r="7"/><circle cx="23.500" cy="24" r="7.500"/><circle cx="40.500" cy="24" r="7.500"/><circle cx="7" cy="41" r="7"/><circle cx="24" cy="41" r="7"/><circle cx="41" cy="41" r="7"/></svg></div>
    <div class="sep"></div>
    <div class="cell"><svg class="d-blob" viewBox="0 0 48 48"><path d="M17 9C19 20 30 17 32 24 30 31 19 28 17 39"/><circle cx="15.500" cy="7" r="7"/><circle cx="15.500" cy="24" r="7"/><circle cx="32" cy="24" r="7.500"/><circle cx="15.500" cy="41" r="7"/></svg></div>
    <div class="cell"><svg class="d-term" viewBox="0 0 36 32"><path d="M2 2 15.500 15 2 28"/><path class="bar" d="M19.500 31h14"/></svg></div>
    <div class="cell"><svg class="d-md" viewBox="0 0 48 32"><rect x="3.500" y="3.500" width="41" height="25" rx="2"/><text x="8" y="23">M</text><path class="md-arrow" d="M34.500 9h4v8h4L36.500 24l-6-7h4z"/></svg></div>
    <div class="cell"><svg class="d-pg" viewBox="0 0 48 48"><path d="M15.500 33C12 35 10.500 34.500 9 31 5 24 1.500 13 1.500 8 2 3 7 1 11 1.500c3 0 5 .5 7 1.500M18 4c4-3 10-3.500 14-1 4-1.500 8-1.500 11 0 4 3 3 9 1.500 14-1.500 5-4 9-6.500 14 2 1.500 4.500 1.500 7 1-2.500 3-6 3-9 2M18 4c-4 5-5 10-4 16 1 5 0 8 1.500 12M32 3c6 5 9 12 5 21-1.500 4 .5 5 1 7M17.500 13.500c2-1.500 5-1.500 6 0 1 3-.5 5 0 9 .5 3-1 7-4 8.500 0 2-2 3.500-4 3M33 14c1-1.500 3-1.500 5-.5M33 14c-1 6 3 9 2 17-1 5 0 14-5 15.500-4 1-6-2-6-6V31M21 3.500c-6 4-6 14-4 19 1 3 3 5 4.500 3"/><circle cx="20" cy="15.500" r="1.200"/><circle cx="36" cy="15.500" r="1"/></svg></div>
    <div class="cell"><svg class="d-md" viewBox="0 0 48 32"><rect x="3.500" y="3.500" width="41" height="25" rx="2"/><text x="8" y="23">M</text><path class="md-arrow" d="M34.500 9h4v8h4L36.500 24l-6-7h4z"/></svg></div>
    <div class="cell"><svg class="d-md" viewBox="0 0 48 32"><rect x="3.500" y="3.500" width="41" height="25" rx="2"/><text x="8" y="23">M</text><path class="md-arrow" d="M34.500 9h4v8h4L36.500 24l-6-7h4z"/></svg></div>
  </div>
  <svg class="cards" viewBox="0 0 48 42"><path d="M3 13.500v16.500M19.500 7.500H13a2 2 0 0 0-2 2v23.500a2 2 0 0 0 2 2h6.500"/><rect x="27.500" y="2.500" width="18" height="36" rx="2.500"/></svg>
</footer>
</body>
</html>
```
FILE: styles.css
```css
* { box-sizing: border-box; }
html, body { margin: 0; }
body {
  width: 2160px; height: 1620px; overflow: hidden;
  display: flex; flex-direction: column;
  background: #1c2333; font-family: Lato, "Open Sans", sans-serif; color: #000;
}
button { font: inherit; border: 0; padding: 0; margin: 0; color: inherit; display: flex; align-items: center; }
span { white-space: nowrap; }
svg { display: block; flex: none; fill: none; stroke: currentColor; stroke-linecap: round; stroke-linejoin: round; }
.defs { position: absolute; }

/* device status */
.status { height: 40px; padding: 0 0 0 12px; display: flex; align-items: center; font: 500 23px Inter, sans-serif; }
.status-time { width: 113px; letter-spacing: .1px; }
.status-date { flex: 1; letter-spacing: .6px; }
.wifi { width: 28px; height: 25px; stroke-width: 4; stroke-linecap: butt; }
.wifi .solid { fill: currentColor; stroke: none; }
.status-pct { width: 62px; margin-left: 8px; font-weight: 400; font-size: 24px; letter-spacing: .4px; }
.battery { position: relative; width: 48px; height: 30px; padding: 3px; border: 2px solid #0c0f17; border-radius: 8px; margin-right: 15px; }
.battery::after { content: ""; position: absolute; right: -7px; top: 9px; width: 3px; height: 8px; border-radius: 0 3px 3px 0; background: #0c0f17; }
.battery i { display: block; width: 27px; height: 20px; border-radius: 4px; background: #000; margin-left: -1px; }

/* top bars */
.topbar { height: 104px; padding: 0 24px 0; display: grid; grid-template-columns: 1fr auto 1fr; align-items: center; border-bottom: 2px solid #2b3245; color: #f5f9fc; font-family: "Noto Sans", sans-serif; }
.redeploy { width: 177px; height: 56px; padding-left: 18px; gap: 16px; border-radius: 8px; background: #2b3245; font-size: 25px; }
.redeploy span { letter-spacing: -.9px; }
.redeploy svg { width: 24px; height: 30px; stroke: #6cd97e; stroke-width: 1.500; }
.title { display: flex; align-items: center; gap: 12px; font-size: 28px; font-weight: 500; }
.title span { letter-spacing: -.3px; }
.ic-mon { width: 31px; height: 30px; stroke: #c2c8cc; stroke-width: 1.800; }
.top-actions { display: flex; justify-content: flex-end; align-items: center; gap: 45px; margin-right: 32px; }
.ic-tabs { width: 42px; height: 42px; stroke-width: 3; }
.ic-tabs rect { fill: #f5f9fc; stroke: #f5f9fc; stroke-width: 0; }
.ic-dots { width: 8px; height: 36px; fill: #f5f9fc; stroke: none; }

.urlbar { height: 80px; padding: 0 8px 0 20px; display: flex; align-items: center; border-bottom: 2px solid #2b3245; color: #f5f9fc; font: 24px "Noto Sans", sans-serif; }
.nav-ic { width: 24px; height: 24px; stroke-width: 2.200; margin-right: 32px; }
.nav-ic.dim { color: #878e96; stroke-width: 1.800; margin-right: 29px; }
.nav-ic.reload { width: 32px; height: 32px; margin-right: 15px; stroke-width: 2.200; }
.url { flex: 1; height: 48px; margin-right: 9px; padding: 0 16px 0 18px; border-radius: 16px; background: #2b3245; display: flex; align-items: center; justify-content: space-between; }
.url span { letter-spacing: -.4px; }
.url svg { width: 18px; height: 18px; color: #9da2a6; stroke-width: 1.600; }
.newtab { width: 157px; height: 48px; padding-left: 17px; gap: 9px; border: 2px solid #3c445c; border-radius: 12px; background: none; color: #c2c8cc; }
.newtab span { letter-spacing: -.8px; }
.newtab svg { width: 22px; height: 22px; stroke-width: 1.700; }

/* application */
.app { height: 1236px; display: flex; background: #fff; }
.sidebar { width: 512px; padding: 44px 32px 0; border-right: 2px solid #d1d5db; display: flex; flex-direction: column; }
.brand { height: 124px; padding-left: 24px; display: flex; gap: 20px; }
.brand svg { width: 44px; height: 54px; color: #808080; stroke-width: 4.500; }
.brand span { font-size: 41px; font-weight: 900; letter-spacing: -1.050px; line-height: 60px; }
.profile { height: 148px; padding-left: 24px; border: 2px solid #bfbfbf; border-radius: 16px; display: flex; align-items: center; gap: 32px; }
.avatar { width: 96px; height: 96px; border-radius: 50%; background: #808080; color: #fff; font-size: 30px; font-weight: 700; display: grid; place-items: center; }
.p-name { font-size: 28px; font-weight: 700; line-height: 44px; letter-spacing: -.25px; }
.p-venue { font-size: 25.500px; line-height: 42px; color: #808080; letter-spacing: -.3px; }
.menu { margin-top: 64px; display: flex; flex-direction: column; gap: 12px; }
.menu a { height: 88px; padding-left: 32px; border-radius: 8px; display: flex; align-items: center; gap: 24px; font-size: 29px; font-weight: 700; }
.menu span { padding-bottom: 3px; }
.menu svg { width: 40px; height: 40px; color: #808080; stroke-width: 2; }
.menu .active { background: #bfbfbf; }
.menu .active svg { color: #000; }
.m-calendar { letter-spacing: .35px; }
.m-discover { letter-spacing: -.65px; }
.m-tours { letter-spacing: -.8px; }
.m-network { letter-spacing: -.75px; }
.m-messages, .m-settings { letter-spacing: -.35px; }
.version { margin: 72px 0 0 16px; font-size: 22px; line-height: 32px; color: #6b7280; letter-spacing: -.3px; }

.main { flex: 1; display: flex; flex-direction: column; }
.head { height: 130px; padding-left: 48px; border-bottom: 2px solid #ced4da; display: flex; align-items: center; }
h1 { width: 262px; margin: 0; padding-bottom: 2px; font-size: 36px; line-height: 56px; font-weight: 600; letter-spacing: -1px; }
.h-welcome { letter-spacing: -1.600px; }
h1 b { font-weight: 700; }
.search { width: 504px; height: 80px; padding-left: 21px; border: 2px solid #d1d5db; border-radius: 12px; display: flex; align-items: center; gap: 25px; color: #808080; font-size: 26px; }
.search span { letter-spacing: -.53px; }
.search svg { width: 34px; height: 34px; stroke-width: 1.900; }
.tools { margin-left: 246px; display: flex; gap: 64px; color: #808080; }
.tools svg { width: 32px; height: 32px; stroke-width: 2; }
.bell { position: relative; }
.bell i { position: absolute; left: 42px; top: -22px; width: 12px; height: 12px; border-radius: 50%; background: #404040; }
.user { width: 260px; height: 80px; margin-left: 56px; padding-left: 30px; border-radius: 8px; background: #f3f4f6; }
.u-av { width: 68px; height: 68px; border: 3px solid #bfbfbf; border-radius: 50%; background: #808080; color: #fff; font-size: 25px; font-weight: 700; display: grid; place-items: center; }
.u-name { width: 67px; margin: 0 19px 0 14px; padding-bottom: 2px; font-size: 26px; font-weight: 700; letter-spacing: -.6px; }
.user svg { width: 28px; height: 28px; color: #808080; stroke-width: 2; }

.content { flex: 1; padding: 0 47px 0 48px; background: #f7f7f7; border-left: 2px solid #d5d9de; border-right: 3px solid #d5d9de; }
.strip { height: 21px; padding-left: 9px; background: #f5f5f4; border-radius: 0 0 12px 12px; overflow: hidden; }
.tab { width: 511px; height: 13px; border-radius: 0 0 10px 10px; background: #fff; box-shadow: 0 2px 5px rgba(0,0,0,.07); }
.desc { margin: 31px 0 33px; font-size: 26px; line-height: 40px; color: #78716c; letter-spacing: -.16px; }
.desc em { font-style: normal; }

.map { position: relative; height: 800px; border-radius: 12px; overflow: hidden; background: #f2efe9; }
.map-svg { width: 100%; height: 100%; }
.map-svg path, .map-svg ellipse, .map-svg circle { vector-effect: non-scaling-stroke; }
.water { fill: #aad3df; stroke: #aad3df; stroke-width: .8; filter: url(#rough); }
.land { fill: #f2efe9; stroke: none; filter: url(#rough); }
.lake { stroke: #aad3df; stroke-width: 2.800; opacity: .8; filter: url(#rough); }
.ring { stroke: #aad3df; stroke-width: 2.500; }
.river { stroke: #c6e0e6; stroke-width: 1.300; opacity: .75; }
.state { stroke: #ddcbd7; stroke-width: 2; }
.nation { stroke: #c9afc6; stroke-width: 3; }
.nation-sea { stroke: #a393b6; stroke-width: 2.600; }
.sea-line { stroke: #a0b2cc; stroke-width: 1.700; }
.coast-line { stroke: #9da0be; stroke-width: 2.300; }
.coast-thin { stroke: #a2b1cb; stroke-width: 1.400; opacity: .8; }
.dots circle { fill: #f2efe9; stroke: #77776f; stroke-width: 1.500; }
.dots .cap { stroke: #55554d; stroke-width: 2; }
.dots .pt { fill: #44443c; stroke: none; }
.labels { font: 500 23px "Noto Sans", sans-serif; fill: #4a4a4a; stroke: #f6f5f1; stroke-opacity: .8; stroke-width: 4; paint-order: stroke; }
.labels .country { fill: #8d618b; }
.route { stroke: #3b82f6; stroke-width: 6; stroke-dasharray: 10 20; opacity: .8; }
.pin { position: absolute; width: 48px; height: 48px; margin: -24px 0 0 -24px; border: 4px solid #fff; border-radius: 50%; background: #10b981; color: #fff; font: bold 24px/40px "Liberation Sans", sans-serif; text-align: center; box-shadow: 0 4px 8px rgba(0,0,0,.3); }
.pin.amber { background: #f59e0b; }
.p1 { left: 1128px; top: 402px; }
.p2 { left: 818px; top: 366px; }
.p3 { left: 418px; top: 434px; }
.zoom { position: absolute; left: 20px; top: 20px; width: 68px; height: 128px; border: 4px solid rgba(0,0,0,.2); border-radius: 8px; background: #fff; background-clip: padding-box; }
.zoom span { display: block; height: 60px; font: bold 44px/60px "Liberation Sans", sans-serif; text-align: center; }
.zoom span:first-child { border-bottom: 2px solid #ccc; }
.attr { position: absolute; right: 0; bottom: 0; width: 474px; height: 32px; padding-left: 9px; display: flex; align-items: center; gap: 8px; background: rgba(255,255,255,.8); color: #333; font: 24px/32px "Liberation Sans", sans-serif; letter-spacing: .12px; }
.attr svg { width: 24px; height: 16px; stroke: none; }
.attr a { color: #0078a8; }

.actions { margin-top: 48px; display: flex; gap: 16px; font-size: 26px; font-weight: 600; }
.actions button { height: 72px; justify-content: center; border-radius: 12px; }
.actions span { padding-bottom: 2px; }
.btn-hide { width: 334px; border: 2px solid #e5e5e5; background: #fff; color: #0c0a09; }
.btn-hide span { letter-spacing: -.75px; }
.btn-opt { width: 232px; background: #5c6670; color: #fafaf9; }
.btn-opt span { letter-spacing: -.7px; }

/* workspace dock */
.bottom { height: 160px; padding: 0 64px 0 48px; display: flex; align-items: center; background: #1c2333; color: #9da2a6; }
.stop { width: 80px; height: 80px; margin-top: 2px; border-radius: 12px; background: #5538cc; justify-content: center; }
.stop i { width: 35px; height: 35px; border-radius: 6px; background: #f5f9fc; }
.dock { width: 794px; height: 104px; margin: 2px 0 0 555px; padding: 0 12px; border-radius: 24px; background: #2b3245; display: flex; align-items: center; gap: 16px; }
.cell { position: relative; width: 80px; height: 80px; border-radius: 16px; display: grid; place-items: center; }
.cell.active { background: #3c445c; color: #c2c8cc; box-shadow: 0 6px 12px rgba(0,0,0,.18); }
.cell.active i { position: absolute; left: 24px; top: 108px; width: 32px; height: 4px; border-radius: 2px; background: #f5f9fc; }
.sep { width: 2px; height: 32px; background: #3c445c; }
.d-mon { width: 45px; height: 44px; stroke-width: 2; }
.d-blob { width: 48px; height: 48px; stroke: none; fill: currentColor; }
.d-blob path { fill: none; stroke: currentColor; stroke-width: 6; }
.d-term { width: 36px; height: 34px; stroke-width: 2.500; }
.d-term .bar { stroke-width: 3; }
.d-md { width: 48px; height: 32px; color: #82817f; stroke-width: 2.500; }
.d-md text { font: 900 19px Inter, sans-serif; fill: currentColor; stroke: none; }
.d-md .md-arrow { fill: currentColor; stroke: none; }
.d-pg { width: 48px; height: 48px; stroke-width: 2.500; }
.cards { width: 48px; height: 42px; margin: 2px 0 0 auto; stroke-width: 3; }
```
